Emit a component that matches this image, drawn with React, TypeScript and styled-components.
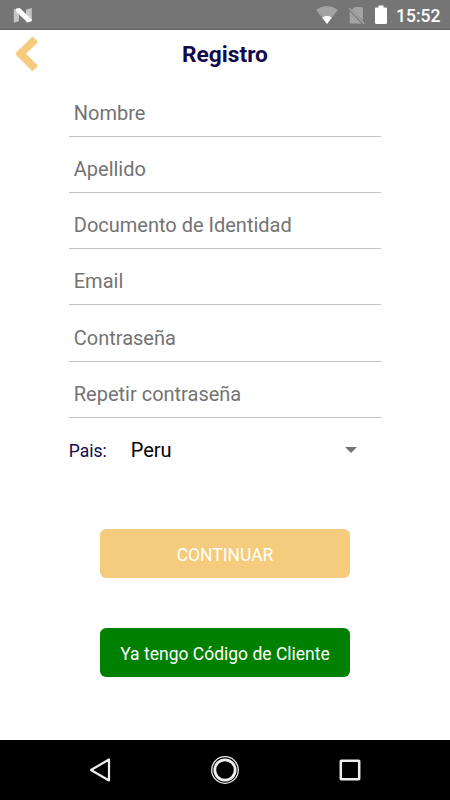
import React from 'react';
import styled, { createGlobalStyle } from 'styled-components';

const GlobalStyle = createGlobalStyle`
  * { box-sizing: border-box; }
  body { margin: 0; background: #fff; font-family: Roboto, sans-serif; }
`;

const Screen = styled.div`
  width: 450px;
  height: 800px;
  display: flex;
  flex-direction: column;
  background: #fff;
  overflow: hidden;
`;

const StatusBar = styled.div`
  height: 30px;
  flex: none;
  display: flex;
  align-items: center;
  justify-content: space-between;
  padding: 0 9px 0 13px;
  background: #757575;
  border-bottom: 1px solid #646266;
`;

const StatusIcons = styled.div`
  display: flex;
  align-items: center;
`;

const Clock = styled.span`
  width: 45px;
  margin-left: 8px;
  font-size: 17.5px;
  font-weight: 500;
  line-height: 30px;
  color: #fff;
  white-space: nowrap;
  padding-top: 2px;
`;

const Header = styled.header`
  height: 50.4px;
  flex: none;
  display: grid;
  grid-template-columns: 60px 1fr 60px;
`;

const BackButton = styled.button`
  border: 0;
  padding: 5px 0 0 14px;
  background: none;
  display: flex;
  align-items: flex-start;
`;

const Title = styled.h1`
  margin: 0;
  font-size: 22.7px;
  font-weight: 700;
  line-height: 49px;
  text-align: center;
  color: #120a4c;
`;

const Form = styled.form`
  width: 312.5px;
  margin-left: 68.75px;
  display: flex;
  flex-direction: column;
`;

const Field = styled.input`
  height: 56.25px;
  border: 0;
  border-bottom: 1px solid #c0c0c0;
  border-radius: 0;
  padding: 9px 5px 0;
  background: none;
  font: 400 20px Roboto, sans-serif;
  outline: 0;
  &::placeholder { color: #737373; opacity: 1; }
`;

const CountryRow = styled.div`
  height: 64px;
  display: flex;
  align-items: center;
`;

const Label = styled.span`
  width: 62px;
  font-size: 17.5px;
  color: #120a4c;
  padding-top: 3px;
`;

const Country = styled.span`
  flex: 1;
  font-size: 20px;
  color: #000;
`;

const Arrow = styled.svg`
  margin-right: 24px;
`;

const Actions = styled.div`
  flex: 1;
  display: flex;
  flex-direction: column;
  align-items: center;
  gap: 50px;
  padding-top: 47.5px;
`;

const ActionButton = styled.button<{ $fill: string }>`
  width: 250px;
  height: 48.75px;
  border: 0;
  border-radius: 6.25px;
  padding: 2px 0 0;
  background: ${({ $fill }) => $fill};
  color: #fff;
  font: 400 17.5px Roboto, sans-serif;
`;

const NavBar = styled.nav`
  height: 60px;
  flex: none;
  display: grid;
  grid-template-columns: repeat(3, 125px);
  justify-content: center;
  align-items: center;
  justify-items: center;
  background: #000;
`;

const fields = ['Nombre', 'Apellido', 'Documento de Identidad', 'Email', 'Contraseña', 'Repetir contraseña'];

export default function App() {
  return (
    <Screen>
      <GlobalStyle />
      <StatusBar>
        <svg width="20" height="30" viewBox="0 0 20 30">
          <path d="M.8 9.500 6 8v13L.8 22.700zM13 9.500 18.800 8v13L13 22.500z" fill="#c6c6c6" />
          <path d="M3 8.800 6.800 8 18.700 19.500V21l-4.200 1.500L3 11.500z" fill="#fff" />
        </svg>
        <StatusIcons>
          <svg width="73" height="30" viewBox="315 0 73 30">
            <path d="M316 9.700Q327 2.300 338 9.700L327 24z" fill="#a3a3a3" />
            <path d="M322.200 17.400Q327 14.600 331.800 17.400L327 24z" fill="#fff" />
            <path d="M355 7h6.500q1.500 0 1.500 1.500v12.200L351.800 9.800zM349.700 11.200 361.500 23.500H351q-1.300 0-1.300-1.300z" fill="#a3a3a3" />
            <path d="M349 8 364.200 23.700" stroke="#a3a3a3" strokeWidth="1.500" />
            <path d="M378.500 5.500h5v2h2.400q1.100 0 1.100 1.100v14.200q0 1.200-1.100 1.200h-9.800q-1.100 0-1.100-1.200V8.600q0-1.100 1.100-1.100h2.400z" fill="#fff" />
          </svg>
          <Clock>15:52</Clock>
        </StatusIcons>
      </StatusBar>
      <Header>
        <BackButton aria-label="Atrás" type="button">
          <svg width="26" height="38" viewBox="14 35 26 38">
            <path d="M31.700 37.200q.8-.7 1.600 0l4 3.900q.7.8 0 1.600L26 53.800l11.300 11.200q.7.8 0 1.600l-4 4q-.8.7-1.600 0L15.900 54.800q-.8-.9 0-1.800z" fill="#f5cb7d" />
          </svg>
        </BackButton>
        <Title>Registro</Title>
      </Header>
      <Form>
        {fields.map((name) => (
          <Field key={name} placeholder={name} aria-label={name} />
        ))}
        <CountryRow>
          <Label>Pais:</Label>
          <Country>Peru</Country>
          <Arrow width="12" height="6" viewBox="0 0 12 6">
            <path d="M0 0h12L6 6z" fill="#737373" />
          </Arrow>
        </CountryRow>
      </Form>
      <Actions>
        <ActionButton $fill="#f5cb7d">CONTINUAR</ActionButton>
        <ActionButton $fill="#008000">Ya tengo Código de Cliente</ActionButton>
      </Actions>
      <NavBar>
        <svg width="30" height="30" viewBox="85 755 30 30">
          <path d="M109 759.500v21L91 770z" fill="none" stroke="#eee" strokeWidth="2.200" strokeLinejoin="round" />
        </svg>
        <svg width="30" height="30" viewBox="0 0 30 30" fill="none" stroke="#eee">
          <circle cx="15" cy="15" r="13.300" strokeWidth="1.300" />
          <circle cx="15" cy="15" r="10.200" strokeWidth="2.800" />
        </svg>
        <svg width="30" height="30" viewBox="0 0 30 30">
          <rect x="5.800" y="5.800" width="18.400" height="18.400" rx=".5" fill="none" stroke="#eee" strokeWidth="2.500" />
        </svg>
      </NavBar>
    </Screen>
  );
}
